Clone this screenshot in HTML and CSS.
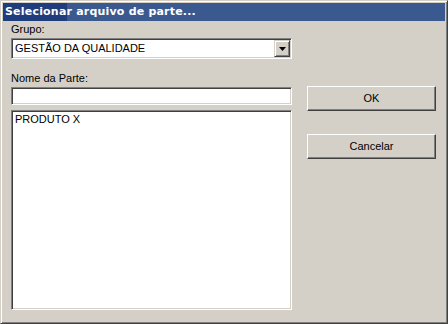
FILE: index.html
```html
<!DOCTYPE html>
<html lang="pt">
<head>
<meta charset="utf-8">
<title>Selecionar arquivo de parte...</title>
<link rel="stylesheet" href="styles.css">
</head>
<body>
<div class="window">
  <div class="titlebar">Selecionar arquivo de parte...</div>
  <div class="content">
    <div class="left">
      <div class="label">Grupo:</div>
      <div class="combo">
        <span class="combo-text">GESTÃO DA QUALIDADE</span>
        <span class="drop"><svg width="7" height="4" viewBox="0 0 7 4"><path d="M0 0H7L3.5 4Z" fill="#000"/></svg></span>
      </div>
      <div class="label label-gap">Nome da Parte:</div>
      <div class="edit"></div>
      <div class="list"><div class="item">PRODUTO X</div></div>
    </div>
    <div class="right">
      <div class="btn btn-ok">OK</div>
      <div class="btn btn-cancel">Cancelar</div>
    </div>
  </div>
</div>
</body>
</html>
```
FILE: styles.css
```css
html, body {
  margin: 0;
  padding: 0;
  background: #D4D0C8;
}
body {
  font-family: "Liberation Sans", Arial, sans-serif;
  font-size: 11px;
  color: #000;
}
.window {
  box-sizing: border-box;
  width: 448px;
  height: 324px;
  background: #D4D0C8;
  border: 1px solid;
  border-color: #D4D0C8 #404040 #404040 #D4D0C8;
  box-shadow: inset 1px 1px #FFFFFF, inset -1px -1px #808080;
  padding: 2px;
  display: flex;
  flex-direction: column;
}
.titlebar {
  height: 18px;
  line-height: 18px;
  padding-left: 2px;
  color: #fff;
  font-family: "DejaVu Sans", sans-serif;
  font-weight: bold;
  font-size: 11px;
  letter-spacing: 0.2px;
  background: linear-gradient(to right, #1F3D7C 0, #1F3D7C 64px, #3A5A8F 64px, #3A5A8F 100%);
  white-space: nowrap;
}
.content {
  display: flex;
  padding: 2px 9px 0 8px;
  gap: 15px;
}
.left {
  width: 281px;
  display: flex;
  flex-direction: column;
}
.label {
  height: 13px;
  line-height: 13px;
  margin-bottom: 2px;
}
.label-gap {
  margin-top: 13px;
}
.combo {
  box-sizing: border-box;
  height: 21px;
  background: #fff;
  border: 1px solid;
  border-color: #808080 #FFFFFF #FFFFFF #808080;
  box-shadow: inset 1px 1px #404040, inset -1px -1px #D4D0C8;
  padding: 1px 1px 1px 3px;
  display: flex;
  align-items: flex-start;
}
.combo-text {
  flex: 1;
  line-height: 15px;
  padding-top: 1px;
}
.drop {
  box-sizing: border-box;
  width: 16px;
  height: 17px;
  background: #D4D0C8;
  border: 1px solid;
  border-color: #D4D0C8 #404040 #404040 #D4D0C8;
  box-shadow: inset 1px 1px #FFFFFF, inset -1px -1px #808080;
  display: flex;
  align-items: center;
  justify-content: center;
}
.drop svg {
  display: block;
  margin-top: 1px;
}
.edit {
  box-sizing: border-box;
  height: 18px;
  background: #fff;
  border: 1px solid;
  border-color: #808080 #FFFFFF #FFFFFF #808080;
  box-shadow: inset 1px 1px #404040, inset -1px -1px #D4D0C8;
}
.list {
  box-sizing: border-box;
  height: 200px;
  margin-top: 5px;
  background: #fff;
  border: 1px solid;
  border-color: #808080 #FFFFFF #FFFFFF #808080;
  box-shadow: inset 1px 1px #404040, inset -1px -1px #D4D0C8;
  padding: 2px 3px;
}
.item {
  line-height: 13px;
}
.right {
  width: 129px;
  display: flex;
  flex-direction: column;
}
.btn {
  box-sizing: border-box;
  height: 25px;
  line-height: 23px;
  text-align: center;
  background: #D4D0C8;
  border: 1px solid;
  border-color: #FFFFFF #404040 #404040 #FFFFFF;
  box-shadow: inset -1px -1px #808080;
}
.btn-ok {
  margin-top: 63px;
}
.btn-cancel {
  margin-top: 23px;
}
```
